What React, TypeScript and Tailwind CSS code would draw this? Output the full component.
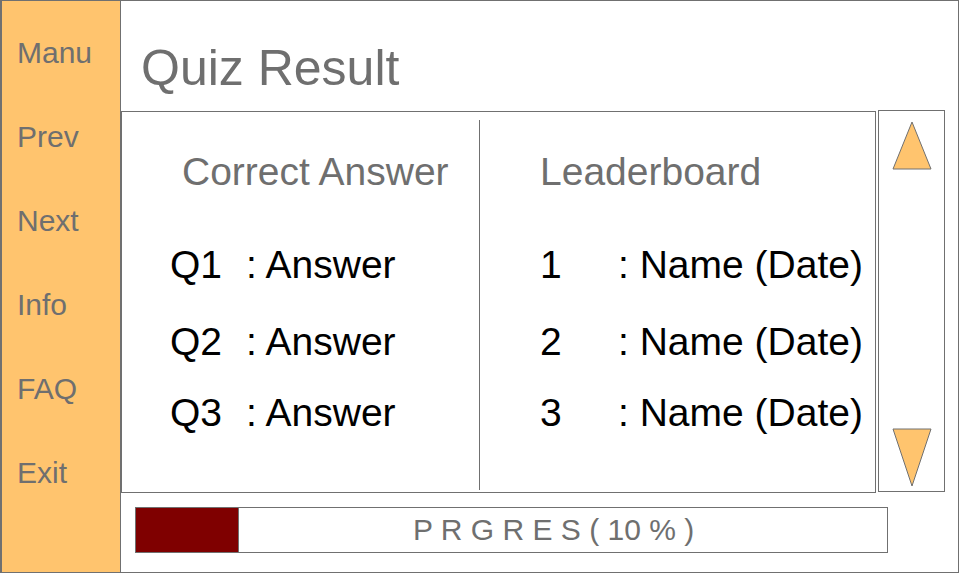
const menu = ["Manu", "Prev", "Next", "Info", "FAQ", "Exit"];

const answers = [
  { q: "Q1", mt: "mt-[54px]" },
  { q: "Q2", mt: "mt-[38px]" },
  { q: "Q3", mt: "mt-[32px]" },
];

function UpArrow() {
  return (
    <svg width="40" height="49" viewBox="0 0 40 49">
      <polygon points="20,1 39,48 1,48" fill="#ffc46e" stroke="#707070" strokeWidth="1" />
    </svg>
  );
}

function DownArrow() {
  return (
    <svg width="40" height="59" viewBox="0 0 40 59">
      <polygon points="1,1 39,1 20,58" fill="#ffc46e" stroke="#707070" strokeWidth="1" />
    </svg>
  );
}

export default function App() {
  return (
    <div
      className="w-[959px] h-[573px] box-border border border-l-2 border-[#707070] bg-white flex overflow-hidden"
      style={{ fontFamily: '"Liberation Sans", Arial, sans-serif' }}
    >
      {/* side menu */}
      <div className="w-[119px] shrink-0 bg-[#ffc46e] border-r border-[#707070] flex flex-col gap-[54px] pt-[37px] pl-[15px]">
        {menu.map((m) => (
          <div key={m} className="text-[30px] leading-[30px] text-[#6f6f6f]">
            {m}
          </div>
        ))}
      </div>

      <div className="flex-1 flex flex-col">
        <div className="h-[110px] pt-[42px] pl-[20px] text-[50px] leading-[50px] text-[#6f6f6f]">
          Quiz Result
        </div>

        <div className="flex items-start gap-[2px]">
          {/* results panel */}
          <div className="w-[755px] h-[382px] box-border border border-[#707070] flex text-[39px] leading-[39px]">
            <div className="w-[357px] pt-[40px]">
              <div className="pl-[60px] text-[#6f6f6f]">Correct Answer</div>
              {answers.map((a) => (
                <div key={a.q} className={`flex pl-[48px] text-black ${a.mt}`}>
                  <span className="w-[76px]">{a.q}</span>
                  <span>: Answer</span>
                </div>
              ))}
            </div>
            <div className="w-px h-[370px] mt-[8px] bg-[#707070]" />
            <div className="flex-1 pt-[40px] pl-[60px]">
              <div className="text-[#6f6f6f]">Leaderboard</div>
              {answers.map((a, i) => (
                <div key={a.q} className={`flex text-black ${a.mt}`}>
                  <span className="w-[78px]">{i + 1}</span>
                  <span>: Name (Date)</span>
                </div>
              ))}
            </div>
          </div>

          {/* scroll arrows */}
          <div className="w-[67px] h-[382px] -mt-px box-border border border-[#707070] flex flex-col items-center justify-between pt-[10px] pb-[4px]">
            <UpArrow />
            <DownArrow />
          </div>
        </div>

        {/* progress */}
        <div className="mt-[14px] ml-[14px] w-[753px] h-[46px] box-border border border-[#707070] flex">
          <div className="w-[103px] h-full bg-[#7f0000] border-r border-[#707070]" />
          <div className="flex-1 flex items-center pl-[174px] text-[30px] leading-[30px] text-[#6f6f6f]">
            P R G R E S ( 10 % )
          </div>
        </div>
      </div>
    </div>
  );
}
